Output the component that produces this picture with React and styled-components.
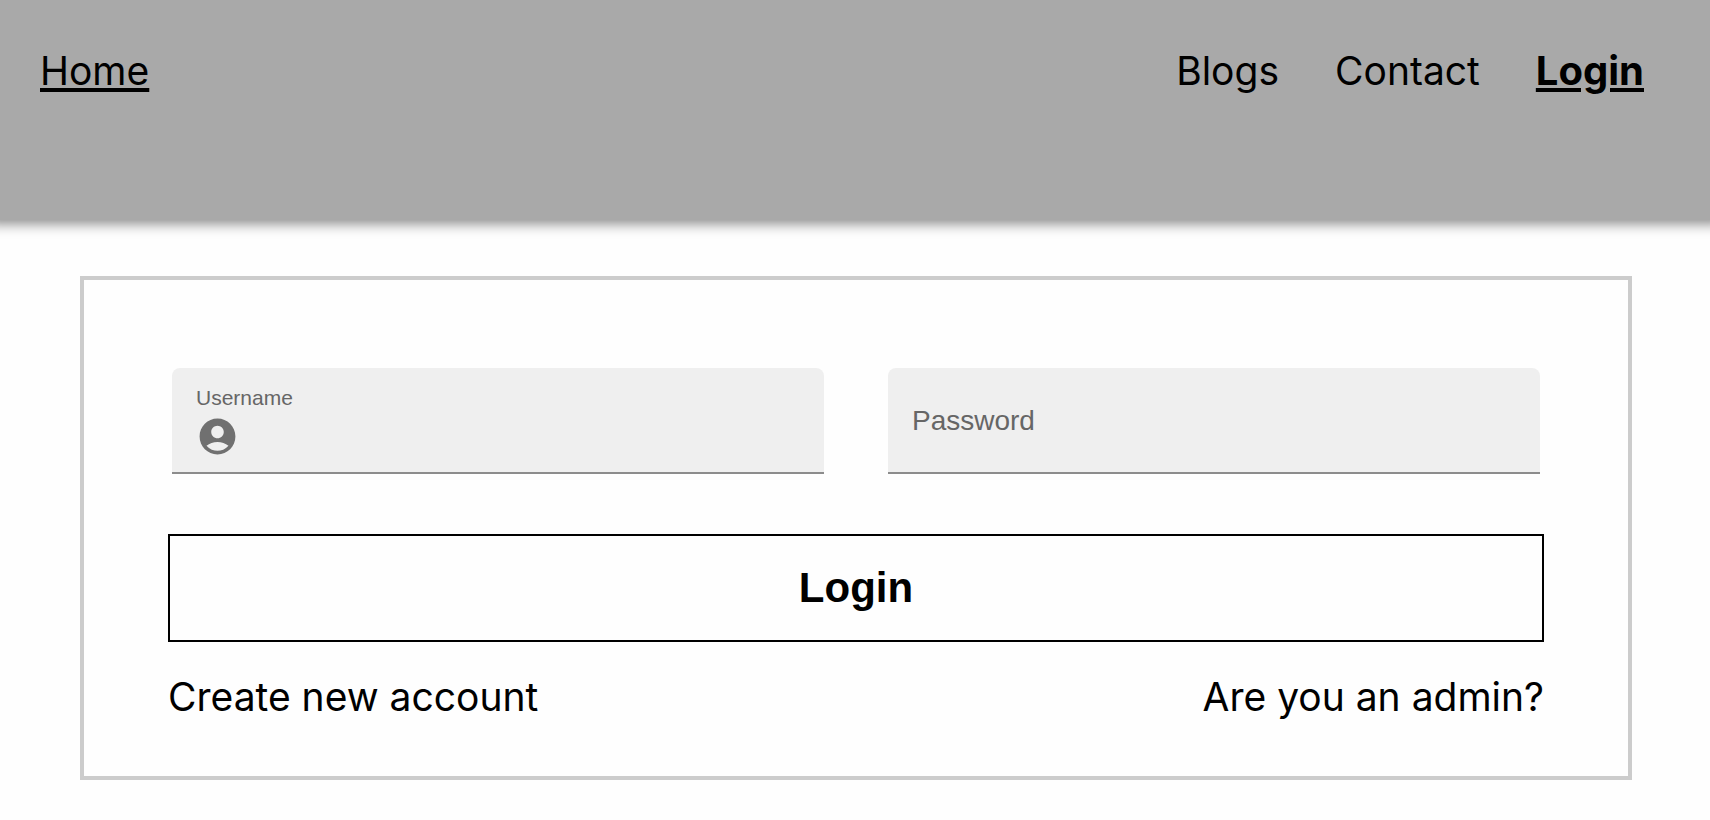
import React, { useState } from "react";
import styled, { createGlobalStyle } from "styled-components";

const GlobalStyle = createGlobalStyle`
  * { box-sizing: border-box; }
  body {
    margin: 0;
    background: #fefefe;
    color: #000;
    font-family: Inter, "Liberation Sans", sans-serif;
    font-size: 39px;
    line-height: 48px;
  }
`;

const Header = styled.header`
  display: flex;
  justify-content: space-between;
  align-items: flex-start;
  min-height: 220px;
  padding: 47px 66px 0 40px;
  background: #a9a9a9;
  box-shadow: 0 -8px 12px 12px rgba(0, 0, 0, 0.45);
`;

const Nav = styled.nav`
  display: flex;
  gap: 56px;
`;

const TextLink = styled.a`
  color: inherit;
  font-size: ${(p) => (p.$bold ? 40 : 39)}px;
  font-weight: ${(p) => (p.$bold ? 700 : 400)};
  text-decoration: ${(p) => (p.$underlined ? "underline" : "none")};
  text-decoration-thickness: 4px;
  text-underline-offset: 3px;
`;

const Card = styled.form`
  display: flex;
  flex-direction: column;
  margin: 56px 78px 40px 80px;
  padding: 88px 84px 55px;
  border: 4px solid #ccc;
`;

const Fields = styled.div`
  display: grid;
  grid-template-columns: 1fr 1fr;
  gap: 64px;
  padding: 0 4px;
`;

const Field = styled.div`
  display: grid;
  align-content: ${(p) => (p.$raised ? "start" : "center")};
  row-gap: 4px;
  height: 106px;
  padding: ${(p) => (p.$raised ? "18px 24px 0" : "2px 24px 0")};
  border-bottom: 2px solid #8c8c8c;
  border-radius: 8px 8px 0 0;
  background: #efefef;
  font-family: "Liberation Sans", Arial, sans-serif;
`;

const Label = styled.label`
  grid-area: ${(p) => (p.$raised ? "auto" : "1 / 1")};
  color: #666;
  font-size: ${(p) => (p.$raised ? 21 : 28)}px;
  line-height: ${(p) => (p.$raised ? 24 : 44)}px;
  pointer-events: none;
`;

const InputRow = styled.div`
  display: flex;
  align-items: center;
  gap: 16px;
`;

const Input = styled.input`
  grid-area: 1 / 1;
  flex: 1;
  min-width: 0;
  height: 44px;
  padding: 0;
  border: 0;
  outline: 0;
  background: transparent;
  font: 28px "Liberation Sans", Arial, sans-serif;
`;

const Icon = styled.svg`
  width: 43px;
  height: 43px;
  fill: #707070;
`;

const SubmitButton = styled.button`
  height: 108px;
  margin-top: 60px;
  padding: 0;
  border: 2px solid #000;
  background: transparent;
  color: #000;
  font: bold 42px "Liberation Sans", Arial, sans-serif;
  cursor: pointer;
`;

const Links = styled.div`
  display: flex;
  justify-content: space-between;
  margin-top: 31px;
`;

export default function App() {
  const [username, setUsername] = useState("");
  const [password, setPassword] = useState("");

  return (
    <>
      <GlobalStyle />
      <Header>
        <TextLink href="#home" $underlined>Home</TextLink>
        <Nav>
          <TextLink href="#blogs">Blogs</TextLink>
          <TextLink href="#contact">Contact</TextLink>
          <TextLink href="#login" $bold $underlined>Login</TextLink>
        </Nav>
      </Header>
      <main>
        <Card onSubmit={(e) => e.preventDefault()}>
          <Fields>
            <Field $raised>
              <Label htmlFor="username" $raised>Username</Label>
              <InputRow>
                <Icon viewBox="0 0 24 24" aria-hidden="true">
                  <path d="M12 2C6.48 2 2 6.48 2 12s4.48 10 10 10 10-4.48 10-10S17.52 2 12 2zm0 4c1.93 0 3.5 1.57 3.5 3.5S13.93 13 12 13s-3.5-1.57-3.5-3.5S10.07 6 12 6zm0 14c-2.03 0-4.43-.82-6.14-2.88C7.55 15.8 9.68 15 12 15s4.45.8 6.14 2.12C16.43 19.18 14.03 20 12 20z" />
                </Icon>
                <Input
                  id="username"
                  value={username}
                  onChange={(e) => setUsername(e.target.value)}
                />
              </InputRow>
            </Field>
            <Field>
              {!password && <Label htmlFor="password">Password</Label>}
              <Input
                id="password"
                type="password"
                aria-label="Password"
                value={password}
                onChange={(e) => setPassword(e.target.value)}
              />
            </Field>
          </Fields>
          <SubmitButton type="submit">Login</SubmitButton>
          <Links>
            <TextLink href="#register">Create new account</TextLink>
            <TextLink href="#admin">Are you an admin?</TextLink>
          </Links>
        </Card>
      </main>
    </>
  );
}
